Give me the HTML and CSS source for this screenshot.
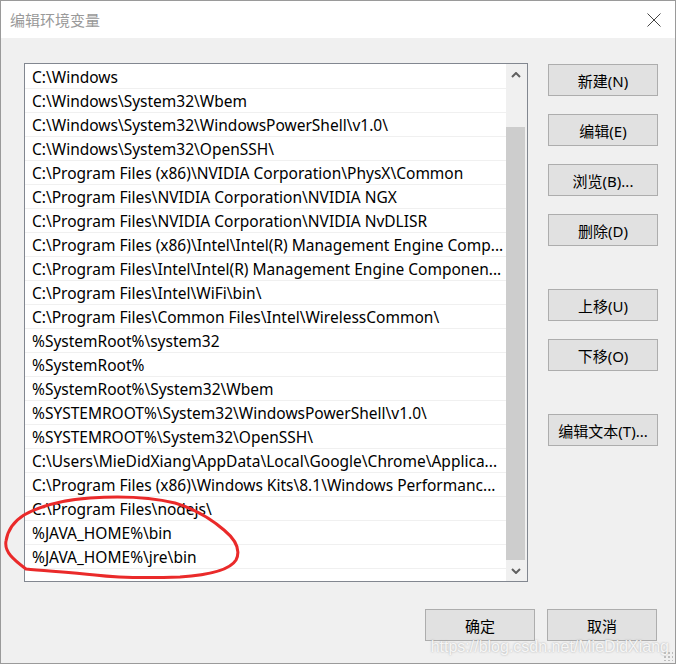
FILE: index.html
```html
<!DOCTYPE html>
<html lang="zh-cn">
<head>
<meta charset="UTF-8">
<title>编辑环境变量</title>
<link rel="stylesheet" href="styles.css">
</head>
<body>
<div class="window">
  <!-- 标题栏 -->
  <div class="titlebar">
    <span class="title">编辑环境变量</span>
    <svg class="close" width="14" height="14" viewBox="0 0 14 14">
      <path d="M0.5 0.5 L13.5 13.5 M13.5 0.5 L0.5 13.5" stroke="#444" stroke-width="1" fill="none"/>
    </svg>
  </div>
  <div class="content">
    <div class="top">
      <!-- 路径列表 -->
      <div class="listbox">
        <ul class="items">
          <li>C:\Windows</li>
          <li>C:\Windows\System32\Wbem</li>
          <li>C:\Windows\System32\WindowsPowerShell\v1.0\</li>
          <li>C:\Windows\System32\OpenSSH\</li>
          <li>C:\Program Files (x86)\NVIDIA Corporation\PhysX\Common</li>
          <li>C:\Program Files\NVIDIA Corporation\NVIDIA NGX</li>
          <li>C:\Program Files\NVIDIA Corporation\NVIDIA NvDLISR</li>
          <li>C:\Program Files (x86)\Intel\Intel(R) Management Engine Comp...</li>
          <li>C:\Program Files\Intel\Intel(R) Management Engine Componen...</li>
          <li>C:\Program Files\Intel\WiFi\bin\</li>
          <li>C:\Program Files\Common Files\Intel\WirelessCommon\</li>
          <li>%SystemRoot%\system32</li>
          <li>%SystemRoot%</li>
          <li>%SystemRoot%\System32\Wbem</li>
          <li>%SYSTEMROOT%\System32\WindowsPowerShell\v1.0\</li>
          <li>%SYSTEMROOT%\System32\OpenSSH\</li>
          <li>C:\Users\MieDidXiang\AppData\Local\Google\Chrome\Applica...</li>
          <li>C:\Program Files (x86)\Windows Kits\8.1\Windows Performanc...</li>
          <li>C:\Program Files\nodejs\</li>
          <li>%JAVA_HOME%\bin</li>
          <li>%JAVA_HOME%\jre\bin</li>
          <li></li>
        </ul>
        <div class="scrollbar">
          <div class="arrow">
            <svg width="10" height="6" viewBox="0 0 10 6"><path d="M1 5 L5 1 L9 5" stroke="#606060" stroke-width="2" fill="none"/></svg>
          </div>
          <div class="track"><div class="thumb"></div></div>
          <div class="arrow">
            <svg width="10" height="6" viewBox="0 0 10 6"><path d="M1 1 L5 5 L9 1" stroke="#606060" stroke-width="2" fill="none"/></svg>
          </div>
        </div>
      </div>
      <!-- 右侧按钮 -->
      <div class="side">
        <button class="btn">新建(N)</button>
        <button class="btn">编辑(E)</button>
        <button class="btn">浏览(B)...</button>
        <button class="btn">删除(D)</button>
        <button class="btn group">上移(U)</button>
        <button class="btn">下移(O)</button>
        <button class="btn group">编辑文本(T)...</button>
      </div>
    </div>
    <div class="footer">
      <button class="btn">确定</button>
      <button class="btn">取消</button>
    </div>
  </div>
  <!-- 红色手绘圈 -->
  <svg class="mark" width="677" height="664" viewBox="0 0 677 664">
    <path d="M26 569 C14 560 4 552 6 541 C8 528 16 520 24 515 C40 506 62 500 90 498 C120 496 150 497 175 503 C195 509 210 518 224 530 C236 540 241 550 236 560 C230 570 210 575 180 577 C150 578 120 578 95 575 C70 572 45 571 26 569 Z" stroke="#ea2a2a" stroke-width="3" fill="none" stroke-linecap="round"/>
  </svg>
  <div class="watermark">https://blog.csdn.net/MieDidXiang</div>
  <div class="grip"></div>
</div>
</body>
</html>
```

FILE: styles.css
```css
/* 页面基础 */
html, body {
  margin: 0;
  padding: 0;
  background: #ffffff;
  font-family: "Noto Sans", "Noto Sans CJK SC", sans-serif;
}
/* 对话框窗口 */
.window {
  position: relative;
  width: 676px;
  height: 664px;
  box-sizing: border-box;
  border: 1px solid #9a9a9a;
  background: #f0f0f0;
  overflow: hidden;
}
.titlebar {
  height: 37px;
  background: #ffffff;
  display: flex;
  align-items: center;
  justify-content: space-between;
  padding: 0 14px 0 9px;
}
.title {
  font-family: "Noto Sans CJK SC", sans-serif;
  font-size: 15px;
  color: #999999;
}
.content {
  padding: 25px 18px 0 23px;
}
.top {
  display: flex;
  gap: 20px;
}
/* 列表框 */
.listbox {
  width: 504px;
  height: 519px;
  box-sizing: border-box;
  border: 1px solid #828790;
  background: #ffffff;
  display: flex;
}
.items {
  list-style: none;
  margin: 0;
  padding: 1px 0 0 0;
  width: 481px;
  overflow: hidden;
}
.items li {
  height: 23px;
  line-height: 25px;
  border-bottom: 1px solid #f0f0f0;
  padding-left: 7px;
  font-size: 15.5px;
  color: #000000;
  white-space: nowrap;
  overflow: hidden;
  text-overflow: ellipsis;
}
.scrollbar {
  width: 21px;
  background: #f0f0f0;
  display: flex;
  flex-direction: column;
}
.arrow {
  height: 21px;
  display: flex;
  align-items: center;
  justify-content: center;
  padding-right: 2px;
}
.track {
  flex: 1;
  display: flex;
  flex-direction: column;
  padding: 42px 2px 0 0;
}
.thumb {
  flex: 1;
  background: #cdcdcd;
}
/* 按钮 */
.side {
  display: flex;
  flex-direction: column;
  gap: 18px;
  padding-top: 1px;
}
.side .group {
  margin-top: 25px;
}
.btn {
  width: 110px;
  height: 32px;
  box-sizing: border-box;
  background: #e1e1e1;
  border: 1px solid #adadad;
  font-family: "Noto Sans", "Noto Sans CJK SC", sans-serif;
  font-size: 15px;
  color: #000000;
  padding: 0;
}
.footer {
  display: flex;
  justify-content: flex-end;
  gap: 12px;
  margin-top: 27px;
}
/* 覆盖层 */
.mark {
  position: absolute;
  left: -1px;
  top: -1px;
  pointer-events: none;
}
.watermark {
  position: absolute;
  right: 6px;
  bottom: 7px;
  font-family: "Liberation Sans", sans-serif;
  font-size: 16px;
  color: rgba(255, 255, 255, 0.85);
  text-shadow: 0 0 2px rgba(120, 120, 120, 0.6);
}
.grip {
  position: absolute;
  right: 2px;
  bottom: 2px;
  width: 10px;
  height: 10px;
  background: radial-gradient(circle, #bdbdbd 1px, transparent 1.5px) 0 0 / 4px 4px;
}
```
